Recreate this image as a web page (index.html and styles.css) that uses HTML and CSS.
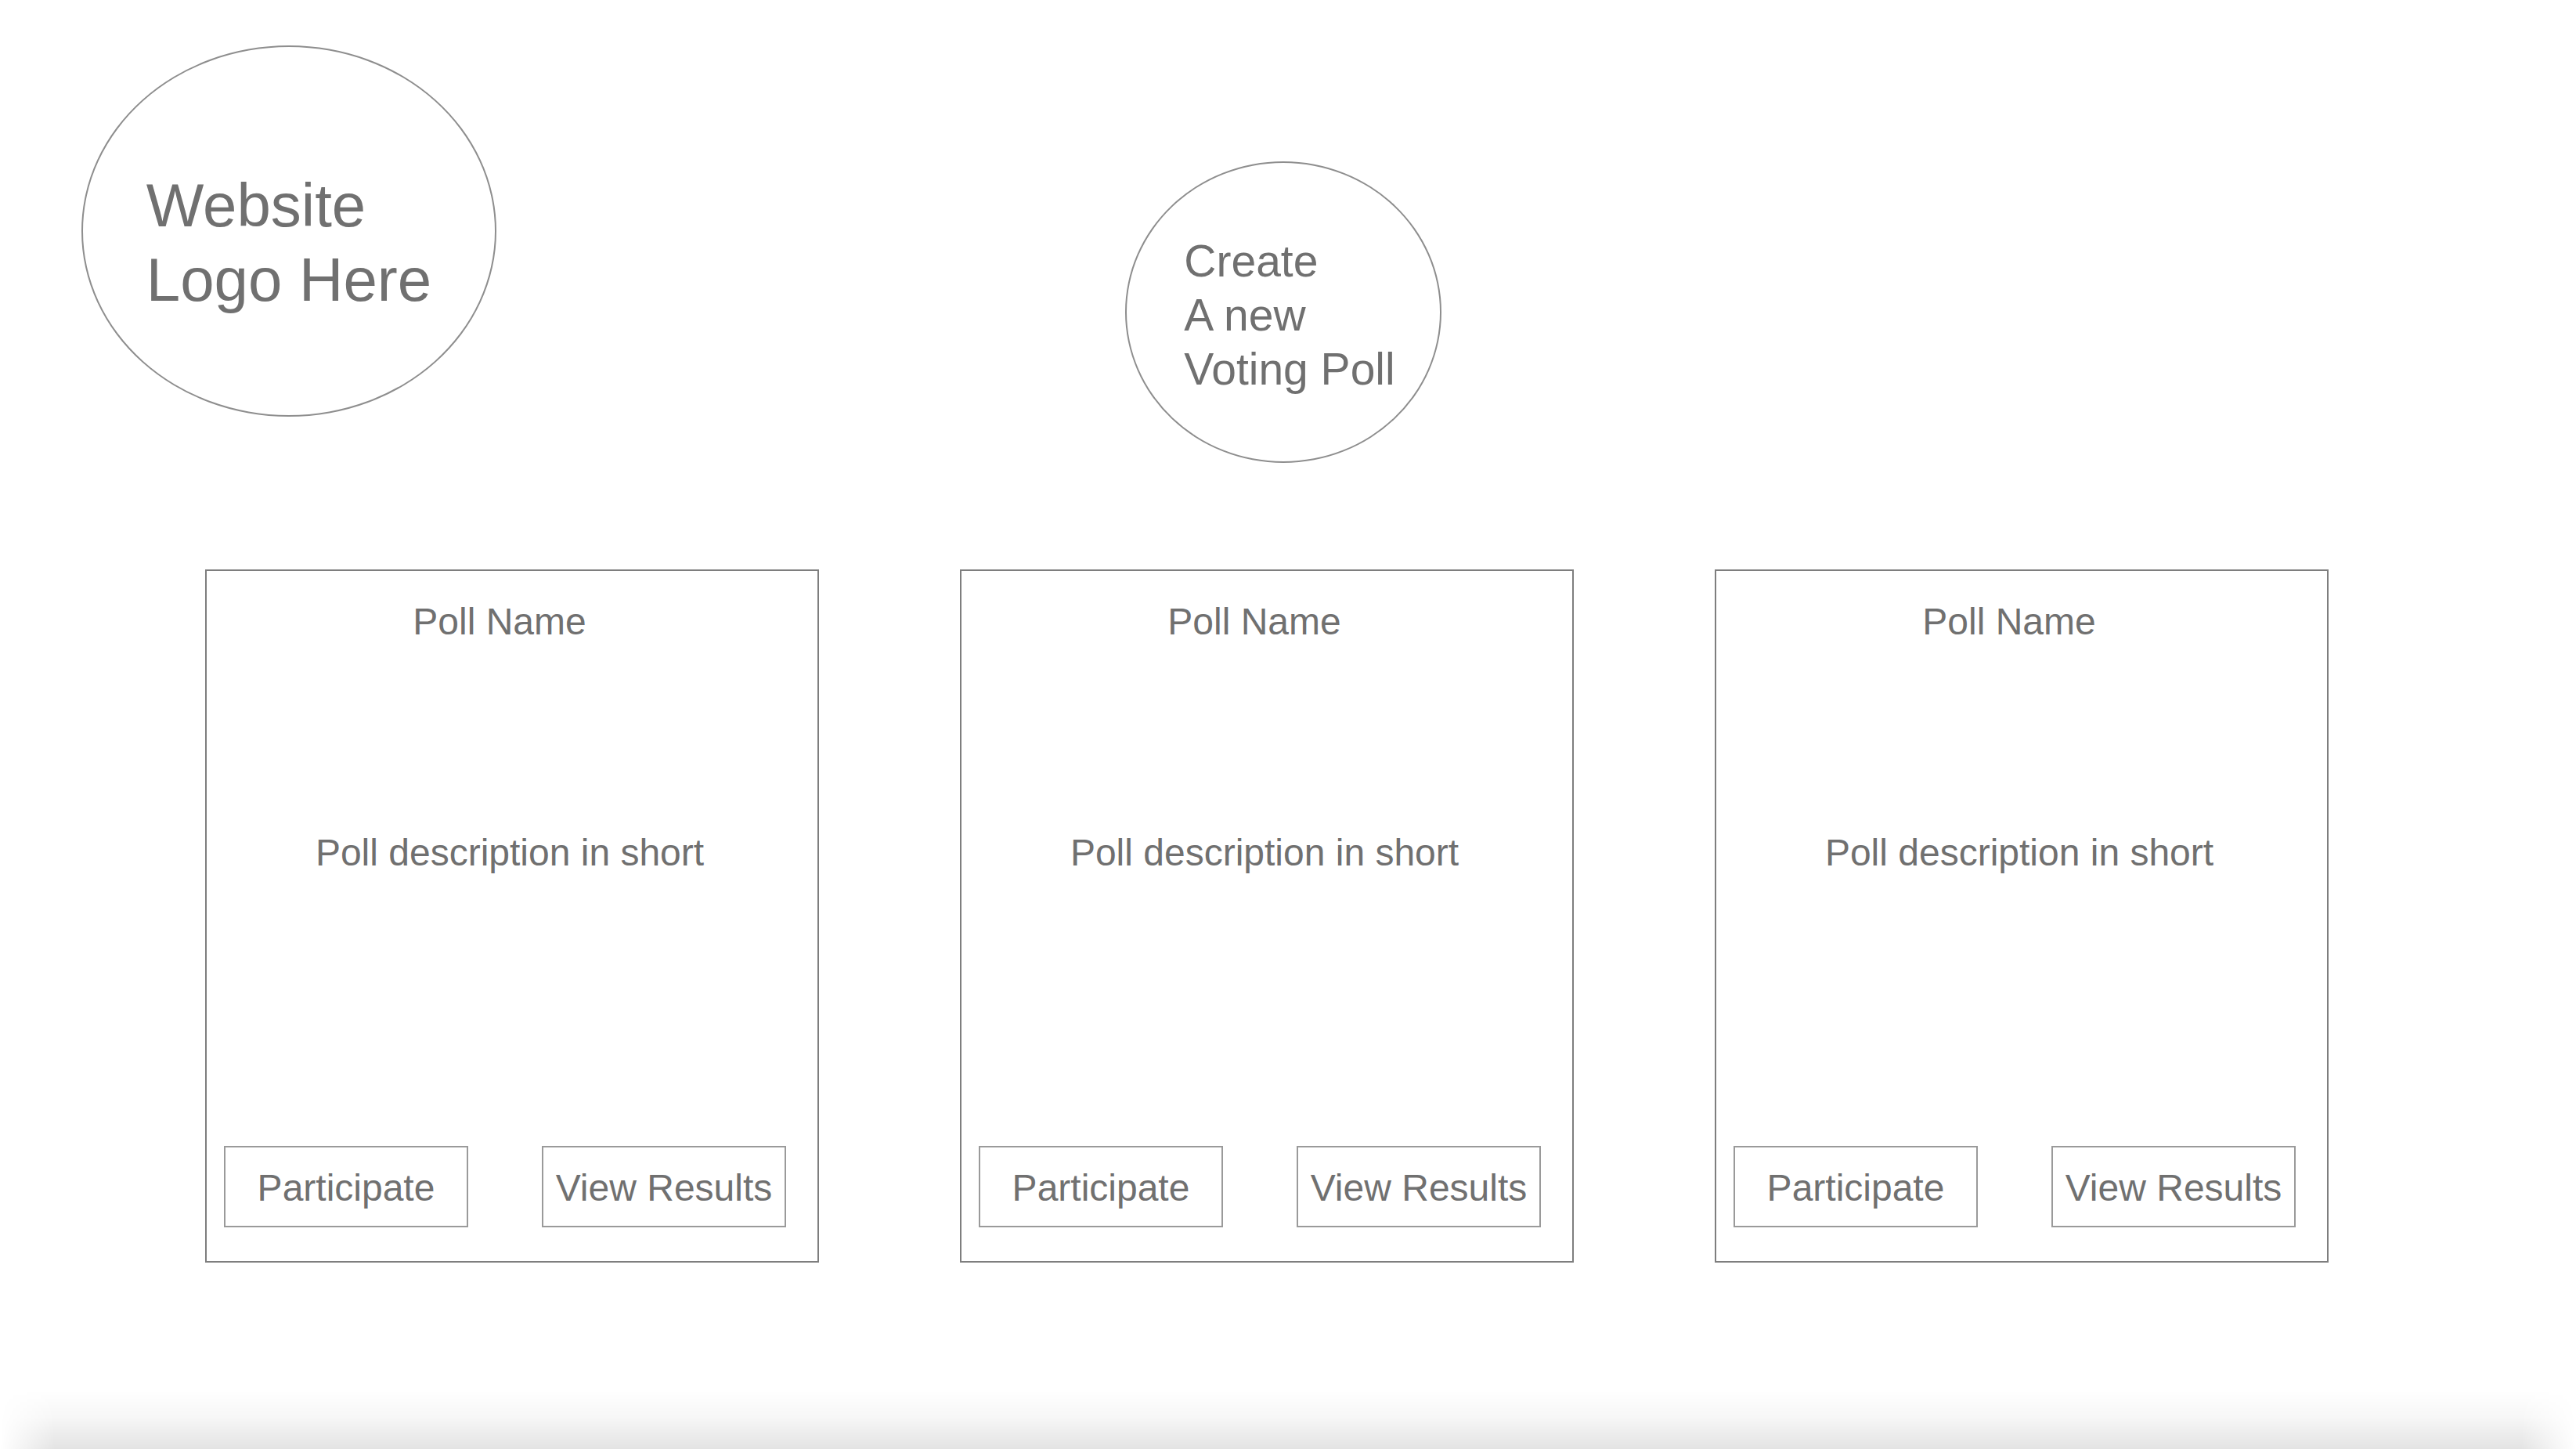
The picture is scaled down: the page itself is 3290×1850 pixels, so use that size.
FILE: index.html
```html
<!DOCTYPE html>
<html lang="en">
<head>
<meta charset="utf-8">
<title>Voting Polls</title>
<link rel="stylesheet" href="styles.css">
</head>
<body>
<div class="page">
  <header class="top">
    <div class="logo"><div class="logo-text">Website<br>Logo Here</div></div>
    <div class="create"><div class="create-text">Create<br>A new<br>Voting Poll</div></div>
  </header>
  <main class="cards">
    <section class="card">
      <div class="card-title">Poll Name</div>
      <div class="card-desc">Poll description in short</div>
      <div class="card-actions">
        <div class="btn">Participate</div>
        <div class="btn">View Results</div>
      </div>
    </section>
    <section class="card">
      <div class="card-title">Poll Name</div>
      <div class="card-desc">Poll description in short</div>
      <div class="card-actions">
        <div class="btn">Participate</div>
        <div class="btn">View Results</div>
      </div>
    </section>
    <section class="card">
      <div class="card-title">Poll Name</div>
      <div class="card-desc">Poll description in short</div>
      <div class="card-actions">
        <div class="btn">Participate</div>
        <div class="btn">View Results</div>
      </div>
    </section>
  </main>
  <div class="bottom-shade"></div>
</div>
</body>
</html>
```

FILE: styles.css
```css
html, body {
  margin: 0;
  padding: 0;
  background: #ffffff;
}

body {
  font-family: "Liberation Sans", Arial, Helvetica, sans-serif;
  color: #707070;
}

.page {
  min-height: 100vh;
  display: flex;
  flex-direction: column;
}

.top {
  display: flex;
  align-items: flex-start;
  padding: 58px 0 0 104px;
}

.logo {
  box-sizing: border-box;
  width: 530px;
  height: 474px;
  border: 2px solid #8e8e8e;
  border-radius: 50%;
  display: flex;
  align-items: center;
  justify-content: center;
  padding-top: 29px;
}

.logo-text {
  font-size: 78px;
  line-height: 95px;
  white-space: nowrap;
}

.create {
  box-sizing: border-box;
  width: 404px;
  height: 385px;
  margin-left: 803px;
  margin-top: 148px;
  border: 2px solid #8e8e8e;
  border-radius: 50%;
  display: flex;
  align-items: center;
  justify-content: center;
  padding-left: 16px;
  padding-top: 8px;
}

.create-text {
  font-size: 57px;
  line-height: 69px;
  white-space: nowrap;
}

.cards {
  display: flex;
  gap: 180px;
  padding-left: 262px;
  margin-top: 136px;
}

.card {
  box-sizing: border-box;
  width: 784px;
  height: 885px;
  border: 2px solid #7e7e7e;
  padding: 37px 40px 43px 22px;
  display: flex;
  flex-direction: column;
}

.card-title {
  font-size: 48px;
  line-height: 56px;
  text-align: center;
  padding-right: 14px;
  white-space: nowrap;
}

.card-desc {
  font-size: 48px;
  line-height: 56px;
  text-align: center;
  padding-left: 12px;
  margin-top: 239px;
  white-space: nowrap;
}

.card-actions {
  margin-top: auto;
  display: flex;
  justify-content: space-between;
}

.btn {
  box-sizing: border-box;
  width: 312px;
  height: 104px;
  border: 2px solid #9a9a9a;
  padding-top: 4px;
  display: flex;
  align-items: center;
  justify-content: center;
  font-size: 48px;
  line-height: 56px;
  white-space: nowrap;
}

.bottom-shade {
  margin-top: auto;
  height: 75px;
  background: linear-gradient(to bottom, rgba(0, 0, 0, 0) 0%, rgba(0, 0, 0, 0.03) 45%, rgba(0, 0, 0, 0.11) 100%);
  -webkit-mask-image: linear-gradient(to right, transparent 0, #000 70px, #000 calc(100% - 70px), transparent 100%);
  mask-image: linear-gradient(to right, transparent 0, #000 70px, #000 calc(100% - 70px), transparent 100%);
}
```
